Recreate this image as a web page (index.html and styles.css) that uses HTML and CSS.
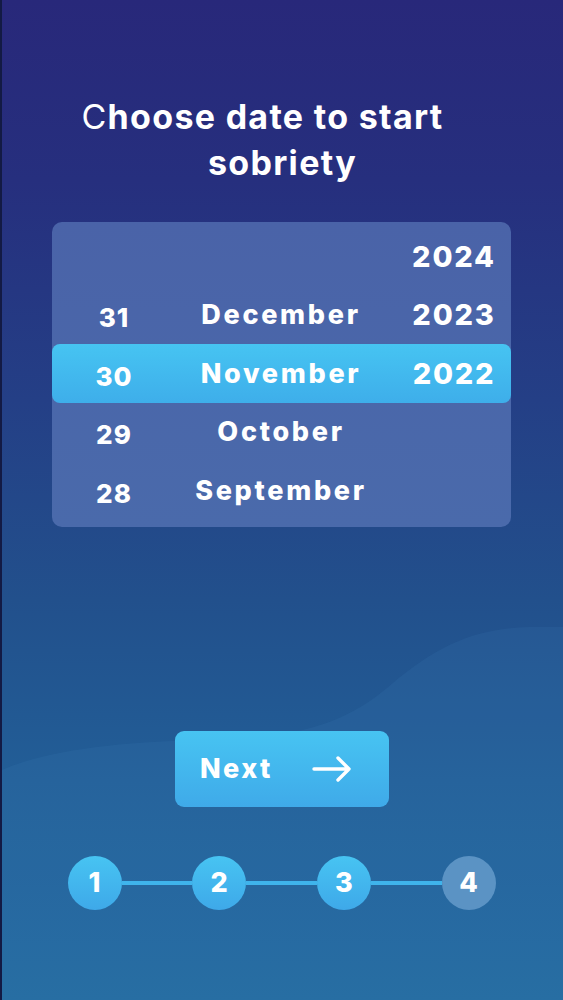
FILE: index.html
```html
<!DOCTYPE html>
<html lang="en">
<head>
<meta charset="utf-8">
<title>Choose date</title>
<link rel="stylesheet" href="styles.css">
</head>
<body>
<main class="screen">
  <svg class="wave" viewBox="0 0 563 1000" preserveAspectRatio="none" aria-hidden="true">
    <path d="M0 770 C 40 752, 110 742, 200 740 C 290 738, 340 728, 390 685 C 440 642, 480 628, 530 627 L 563 627 L 563 1000 L 0 1000 Z" fill="rgba(80,150,210,0.10)"/>
  </svg>
  <h1 class="title"><span class="line first"><span class="thin">C</span>hoose date to start</span><span class="line">sobriety</span></h1>

  <section class="picker">
    <div class="row">
      <span class="day"></span><span class="month"></span><span class="year">2024</span>
    </div>
    <div class="row">
      <span class="day">31</span><span class="month">December</span><span class="year">2023</span>
    </div>
    <div class="row selected">
      <span class="day">30</span><span class="month">November</span><span class="year">2022</span>
    </div>
    <div class="row">
      <span class="day">29</span><span class="month">October</span><span class="year"></span>
    </div>
    <div class="row">
      <span class="day">28</span><span class="month">September</span><span class="year"></span>
    </div>
  </section>

  <div class="actions">
    <button class="next" type="button">
      <span class="next-label">Next</span>
      <svg class="arrow" viewBox="0 0 40 26" aria-hidden="true">
        <path d="M2 13 H37 M26 2 L37 13 L26 24" fill="none" stroke="#ffffff" stroke-width="3.4" stroke-linecap="round" stroke-linejoin="round"/>
      </svg>
    </button>
  </div>

  <ol class="steps">
    <li class="step done">1</li>
    <li class="link"></li>
    <li class="step done">2</li>
    <li class="link"></li>
    <li class="step done">3</li>
    <li class="link"></li>
    <li class="step current">4</li>
  </ol>
</main>
</body>
</html>
```

FILE: styles.css
```css
* { box-sizing: border-box; }

html, body {
  margin: 0;
  padding: 0;
  background: #1a2a5e;
}

.screen {
  position: relative;
  width: 563px;
  height: 1000px;
  overflow: hidden;
  background: linear-gradient(180deg, #28287a 0%, #262f7e 18%, #243f86 40%, #22508c 60%, #225e97 78%, #236a9f 100%);
  border-left: 2px solid #131a44;
  font-family: "Inter", "Liberation Sans", sans-serif;
  color: #ffffff;
  display: flex;
  flex-direction: column;
  align-items: center;
}

.wave {
  position: absolute;
  left: 0;
  top: 0;
  width: 100%;
  height: 100%;
  z-index: 0;
}

.title,
.picker,
.actions,
.steps {
  position: relative;
  z-index: 1;
}

.title {
  margin: 94px 0 0;
  font-size: 34px;
  line-height: 46px;
  font-weight: 700;
  letter-spacing: 1.3px;
  text-align: center;
  display: flex;
  flex-direction: column;
  align-items: center;
}

.line { display: block; }
.line.first { padding-right: 40px; }

.thin { font-weight: 400; }

.picker {
  margin-top: 36px;
  width: 459px;
  margin-left: -2px;
  padding: 5px 0 7px;
  border-radius: 10px;
  background: linear-gradient(180deg, #4a63a8 0%, #4a6aab 100%);
  display: grid;
  grid-template-rows: repeat(5, 58.5px);
}

.row {
  display: grid;
  grid-template-columns: 124px 210px 1fr;
  align-items: center;
  font-size: 27px;
  font-weight: 800;
  letter-spacing: 2.7px;
}

.row.selected {
  border-radius: 8px;
  background: linear-gradient(180deg, #46c4f2 0%, #3eaeea 100%);
}

.day {
  text-align: center;
  padding-top: 6px;
  font-size: 26px;
  letter-spacing: 1px;
}

.month { text-align: center; }

.year {
  text-align: center;
  padding-left: 11px;
  font-size: 29px;
  letter-spacing: 1.8px;
}

.actions {
  margin-top: 204px;
  display: flex;
  justify-content: center;
}

.next {
  width: 214px;
  height: 76px;
  margin-left: -1px;
  border: none;
  border-radius: 9px;
  background: linear-gradient(180deg, #47c4f2 0%, #3faae9 100%);
  color: #ffffff;
  font-family: inherit;
  font-size: 27px;
  font-weight: 800;
  letter-spacing: 2.4px;
  display: flex;
  align-items: center;
  padding: 0 0 0 25px;
  gap: 39px;
}

.arrow {
  width: 40px;
  height: 26px;
}

.steps {
  list-style: none;
  margin: 49px 0 0;
  padding: 0;
  display: flex;
  align-items: center;
  width: 428px;
  margin-left: -2px;
}

.step {
  width: 54px;
  height: 54px;
  flex: none;
  border-radius: 50%;
  display: flex;
  align-items: center;
  justify-content: center;
  font-size: 27px;
  font-weight: 800;
}

.step.done {
  background: linear-gradient(180deg, #47c4f2 0%, #3ea9e9 100%);
}

.step.current {
  background: #5b93c4;
}

.link {
  flex: 1;
  height: 4px;
  background: #3fb4ec;
}
```
